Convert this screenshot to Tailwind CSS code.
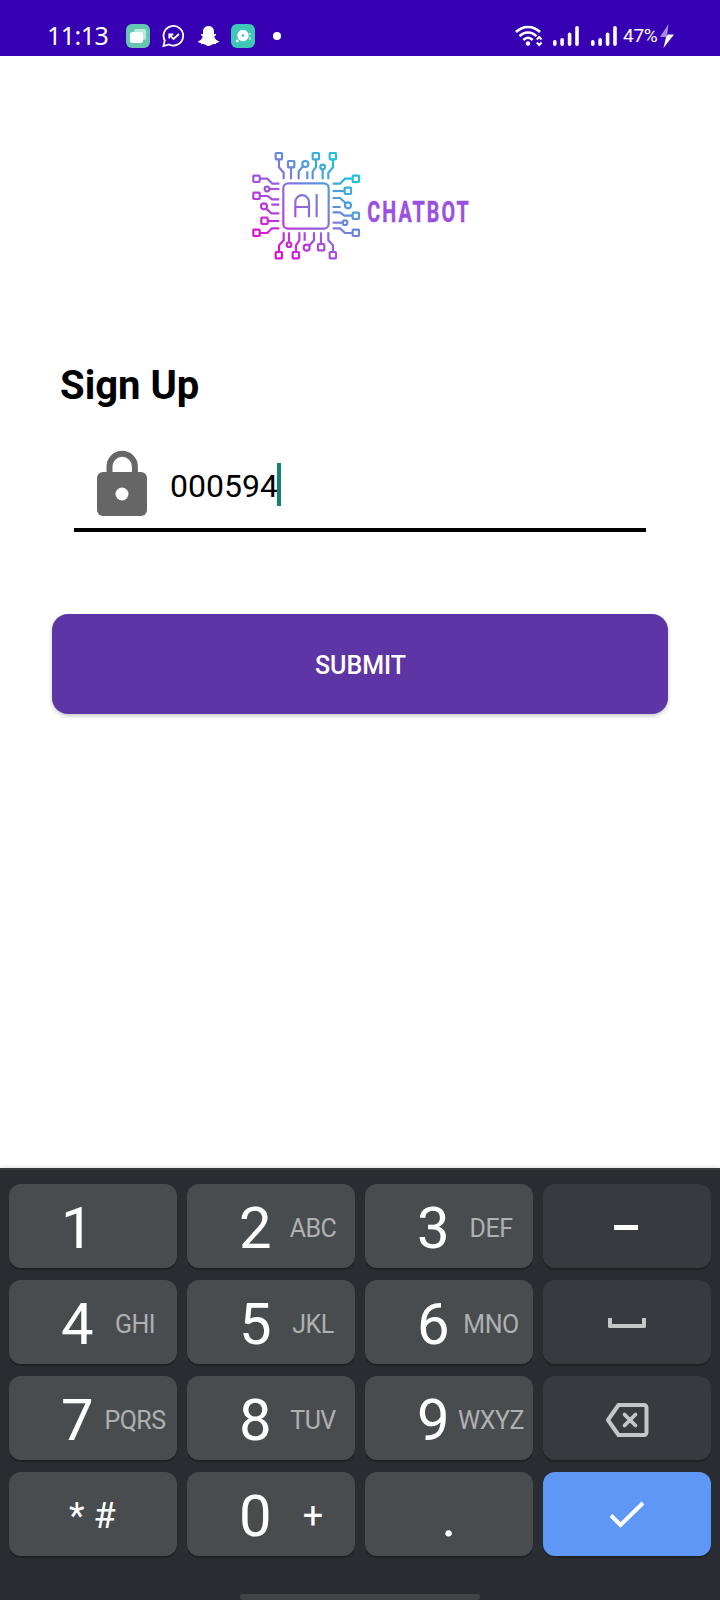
<!DOCTYPE html>
<html lang="en">
<head>
  <meta charset="UTF-8">
  <meta name="viewport" content="width=device-width, initial-scale=1.0">
  <title>Sign Up</title>
  <script src="https://cdn.jsdelivr.net/npm/@tailwindcss/browser@4"></script>
</head>
<body class="bg-white font-['Roboto',sans-serif] w-[720px] h-[1600px] flex flex-col overflow-hidden">

  <!-- Status Bar -->
  <header class="h-14 shrink-0 bg-[#3700b3] text-white flex items-end justify-between pl-[47px] pr-[45px]">
    <div class="flex items-center h-10">
      <span class="w-[79px] text-[25px] leading-[38px] pb-[2px] tracking-[-0.5px] font-['Noto_Sans',sans-serif] whitespace-nowrap">11:13</span>
      <svg class="w-6 h-6" viewBox="0 0 24 24">
        <rect width="24" height="24" rx="6" fill="#66c6b1"/>
        <rect x="8" y="5" width="12" height="11" rx="2" fill="#b9e8df"/>
        <rect x="4" y="8" width="13" height="11" rx="2.5" fill="#fff"/>
      </svg>
      <svg class="w-6 h-6 ml-[11px]" viewBox="0 0 24 24" fill="none" stroke="#fff" stroke-width="1.800">
        <path d="M2.500 22l1.300-5.500a9.800 9.800 0 1 1 4.200 4z"/>
        <path d="M8.300 14.500V10.500h4M8.800 11l3.700 4 5.500-5"/>
      </svg>
      <svg class="w-6 h-6 ml-[11px]" viewBox="0 0 24 24" fill="#fff">
        <path d="M12.500 2c3.600 0 5.500 2.500 5.500 5.700v2.600l1.700-.3c1 .6.3 1.500-1.500 2.400.6 2.300 2.200 4 4.700 4.900.3 1-.9 1.400-2.700 1.700l-.5 1.200c-1.500-.2-3-.2-4.200.6-1.900 1.700-4.100 1.700-6 0-1.200-.8-2.700-.8-4.200-.6L4.800 19c-1.800-.3-3-.7-2.700-1.700 2.500-.9 4.100-2.600 4.700-4.900C5 11.500 4.300 10.600 5.300 10l1.700.3V7.700C7 4.500 8.900 2 12.500 2z"/>
      </svg>
      <svg class="w-6 h-6 ml-[11px]" viewBox="0 0 24 24">
        <rect width="24" height="24" rx="6" fill="#3fc8b6"/>
        <circle cx="12" cy="11.500" r="3.500" fill="none" stroke="#fff" stroke-width="4.400"/>
        <circle cx="12" cy="11.500" r="1" fill="#3fc8b6"/>
        <circle cx="6.300" cy="17" r="1.400" fill="#fff"/>
        <path d="M19 9v2m0 2v3" stroke="#b9ece5" stroke-width="1.500"/>
      </svg>
      <span class="w-2 h-2 ml-[18px] rounded-full bg-white"></span>
    </div>

    <div class="flex items-center h-10">
      <svg class="w-7 h-6" viewBox="0 0 28 24" fill="none" stroke="#fff" stroke-width="2.500">
        <path d="M1 8C8 1.200 18 1.200 25 8M4.500 12.200c5-5 12-5 17 0M8.300 16c3-2.900 6.400-2.900 9.400 0"/>
        <circle cx="13" cy="19.500" r="2.200" fill="#fff" stroke="none"/>
        <path d="M21.800 15.500l2.400-2.500 2.400 2.500M21.800 18.500l2.400 2.500 2.400-2.500" stroke-width="2"/>
      </svg>
      <svg class="w-[27px] h-6 ml-[9px]" viewBox="0 0 27 24" stroke="#fff" stroke-width="3.600" stroke-linecap="round">
        <path d="M2.800 17.800v2.400M10.100 15.800v4.400M17.600 10.300v9.900M25 3.800v16.400"/>
      </svg>
      <svg class="w-[27px] h-6 ml-[11px]" viewBox="0 0 27 24" stroke="#fff" stroke-width="3.600" stroke-linecap="round">
        <path d="M2.800 17.800v2.400M10.100 15.800v4.400M17.600 10.300v9.900M25 3.800v16.400"/>
      </svg>
      <span class="w-[36px] ml-[6px] text-[19px] leading-10 whitespace-nowrap tracking-[-0.3px]">47%</span>
      <svg class="w-4 h-6" viewBox="0 0 16 24">
        <path d="M9.500 0L1 13h14L8 12z" fill="#a58be0"/>
        <path d="M1 13h6L4.500 24 15 10.500H8.700L7.500 13z" fill="#fff"/>
      </svg>
    </div>
  </header>

  <!-- Sign Up Form -->
  <main class="flex-1 flex flex-col">
    <div class="flex mt-[89px] ml-[245px]">
      <svg class="w-[240px] h-[120px]" viewBox="0 0 720 360" fill="none">
        <defs>
          <linearGradient id="chip" x1="70" y1="290" x2="290" y2="70" gradientUnits="userSpaceOnUse">
            <stop offset="0" stop-color="#dc14d2"/>
            <stop offset="0.5" stop-color="#8a6ce0"/>
            <stop offset="1" stop-color="#22bfd8"/>
          </linearGradient>
        </defs>
        <g stroke="url(#chip)" stroke-width="6.500">
          <rect x="115" y="115" width="136" height="136" rx="14"/>
          <path d="M151 217v-46a20 20 0 0 1 41 0v46M151 186h41M215 147v70"/>
          <!-- top pins -->
          <rect x="92" y="24" width="19" height="19" rx="2"/>
          <path d="M102 43v24l14 16v20"/>
          <rect x="129" y="48" width="19" height="19" rx="2"/>
          <path d="M138 67v36"/>
          <circle cx="181" cy="57" r="9"/>
          <path d="M174 64l-13 15v24M187 79v24"/>
          <rect x="203" y="24" width="19" height="19" rx="2"/>
          <path d="M213 43v23l-10 14v23"/>
          <circle cx="233" cy="66" r="7"/>
          <path d="M233 73v30"/>
          <rect x="254" y="24" width="19" height="19" rx="2"/>
          <path d="M264 43v24l-14 16v20"/>
          <!-- bottom pins -->
          <path d="M116 262v24l-14 15v19"/>
          <rect x="92" y="321" width="19" height="19" rx="2"/>
          <path d="M132 262v30"/>
          <circle cx="132" cy="299" r="7"/>
          <path d="M163 262v24l-10 15v19"/>
          <rect x="143" y="321" width="19" height="19" rx="2"/>
          <path d="M179 262v25M207 262v24l-15 16"/>
          <circle cx="185" cy="308" r="9"/>
          <path d="M228 262v34"/>
          <rect x="219" y="297" width="19" height="19" rx="2"/>
          <path d="M250 262v24l14 15v19"/>
          <rect x="254" y="321" width="19" height="19" rx="2"/>
          <!-- left pins -->
          <rect x="25" y="92" width="19" height="19" rx="2"/>
          <path d="M44 101h23l15 15h21"/>
          <circle cx="66" cy="132" r="7"/>
          <path d="M73 132h30"/>
          <rect x="25" y="143" width="19" height="19" rx="2"/>
          <path d="M44 153h24l13 10h22M79 179h24"/>
          <circle cx="57" cy="184" r="9"/>
          <path d="M64 191l15 14h24"/>
          <rect x="49" y="218" width="19" height="19" rx="2"/>
          <path d="M68 228h35"/>
          <rect x="25" y="254" width="19" height="19" rx="2"/>
          <path d="M44 264h23l14-14h22"/>
          <!-- right pins -->
          <path d="M263 116h22l15-15h22"/>
          <rect x="323" y="92" width="19" height="19" rx="2"/>
          <path d="M263 138h35"/>
          <rect x="299" y="128" width="19" height="19" rx="2"/>
          <path d="M263 159h22l17 15M263 186h24"/>
          <circle cx="309" cy="181" r="9"/>
          <path d="M263 202h22l13 10h24"/>
          <rect x="323" y="203" width="19" height="19" rx="2"/>
          <path d="M263 233h30"/>
          <circle cx="300" cy="233" r="7"/>
          <path d="M263 250h22l15 14h22"/>
          <rect x="323" y="254" width="19" height="19" rx="2"/>
        </g>
        <text transform="translate(367 231) scale(0.65 1)" font-family="Roboto, sans-serif" font-weight="700" font-size="91" textLength="468" fill="#9b51e0" stroke="#9b51e0" stroke-width="1.500">CHATBOT</text>
      </svg>
    </div>

    <h1 class="mt-[97px] ml-[60px] text-[40px] leading-[47px] font-bold text-black">Sign Up</h1>

    <div class="mt-[37px] ml-[74px] w-[572px] h-[86px] border-b-4 border-black flex">
      <svg class="w-[52px] h-[68px] ml-[22px] mt-[3px]" viewBox="0 0 52 68">
        <path d="M13.500 24V17.500a12.700 12.700 0 0 1 25.400 0V24" fill="none" stroke="#666" stroke-width="6"/>
        <rect x="1" y="23" width="50" height="44" rx="6" fill="#666"/>
        <circle cx="26" cy="45" r="6.500" fill="#fff"/>
      </svg>
      <div class="flex ml-[22px] mt-[17px] h-[43px]">
        <span class="w-[107px] text-[32px] leading-[46px] text-black whitespace-nowrap">000594</span>
        <span class="w-1 bg-[#15806f]"></span>
      </div>
    </div>

    <button class="mt-[82px] mx-[52px] h-[100px] rounded-[16px] bg-[#5e35a5] text-white text-[25px] font-medium pt-[3px] pl-px shadow-[0_2px_4px_rgba(0,0,0,0.22)]">SUBMIT</button>
  </main>

  <!-- Numeric Keyboard -->
  <section class="h-[432px] shrink-0 bg-[#292d31] border-t-2 border-[#34383a] flex flex-col items-center shadow-[0_-1px_4px_rgba(0,0,0,0.12)]">
    <div class="mt-[14px] grid grid-cols-[repeat(4,168px)] auto-rows-[84px] gap-x-[10px] gap-y-3 text-white text-[58px] leading-none *:rounded-[12px] *:shadow-[0_2px_0_#1e2225]">
      <div class="bg-[#494c4e] grid grid-cols-2 items-center pt-[3px]">
        <span class="pl-[52px]">1</span>
      </div>
      <div class="bg-[#494c4e] grid grid-cols-2 items-center pt-[3px]">
        <span class="pl-[52px]">2</span>
        <span class="text-[25px] text-center tracking-[-0.5px] pt-[2px] text-[#aeb0b1]">ABC</span>
      </div>
      <div class="bg-[#494c4e] grid grid-cols-2 items-center pt-[3px]">
        <span class="pl-[52px]">3</span>
        <span class="text-[25px] text-center tracking-[-0.5px] pt-[2px] text-[#aeb0b1]">DEF</span>
      </div>
      <div class="bg-[#373b3f] flex items-center justify-center">
        <span class="w-6 h-[5px] mt-[3px] mr-[2px] bg-white"></span>
      </div>

      <div class="bg-[#494c4e] grid grid-cols-2 items-center pt-[3px]">
        <span class="pl-[52px]">4</span>
        <span class="text-[25px] text-center tracking-[-0.5px] pt-[2px] text-[#aeb0b1]">GHI</span>
      </div>
      <div class="bg-[#494c4e] grid grid-cols-2 items-center pt-[3px]">
        <span class="pl-[52px]">5</span>
        <span class="text-[25px] text-center tracking-[-0.5px] pt-[2px] text-[#aeb0b1]">JKL</span>
      </div>
      <div class="bg-[#494c4e] grid grid-cols-2 items-center pt-[3px]">
        <span class="pl-[52px]">6</span>
        <span class="text-[25px] text-center tracking-[-0.5px] pt-[2px] text-[#aeb0b1]">MNO</span>
      </div>
      <div class="bg-[#373b3f] flex items-center justify-center">
        <span class="w-[38px] h-[10px] mt-[2px] border-4 border-t-0 rounded-b-[2px] border-[#c5c6c8]"></span>
      </div>

      <div class="bg-[#494c4e] grid grid-cols-2 items-center pt-[3px]">
        <span class="pl-[52px]">7</span>
        <span class="text-[25px] text-center tracking-[-0.5px] pt-[2px] text-[#aeb0b1]">PQRS</span>
      </div>
      <div class="bg-[#494c4e] grid grid-cols-2 items-center pt-[3px]">
        <span class="pl-[52px]">8</span>
        <span class="text-[25px] text-center tracking-[-0.5px] pt-[2px] text-[#aeb0b1]">TUV</span>
      </div>
      <div class="bg-[#494c4e] grid grid-cols-2 items-center pt-[3px]">
        <span class="pl-[52px]">9</span>
        <span class="text-[25px] text-center tracking-[-0.5px] pt-[2px] text-[#aeb0b1]">WXYZ</span>
      </div>
      <div class="bg-[#373b3f] flex items-center justify-center">
        <svg class="w-11 h-9 mt-[4px] mr-px" viewBox="0 0 44 36" fill="none" stroke="#c5c6c8" stroke-width="4" stroke-linejoin="round" stroke-linecap="round">
          <path d="M13.500 3H39a2.500 2.500 0 0 1 2.500 2.500v25A2.500 2.500 0 0 1 39 33H13.500L3 18z"/>
          <path d="M19.500 12.500l11 11M30.500 12.500l-11 11" stroke-width="3.800"/>
        </svg>
      </div>

      <div class="bg-[#494c4e] grid grid-cols-2 items-center pt-1 text-[36px]">
        <span class="pl-[60px] whitespace-pre">* #</span>
      </div>
      <div class="bg-[#494c4e] grid grid-cols-2 items-center pt-[3px]">
        <span class="pl-[52px]">0</span>
        <span class="text-[36px] text-center">+</span>
      </div>
      <div class="bg-[#494c4e] flex items-center justify-center pt-[3px]">.</div>
      <div class="bg-[#5f97f6] flex items-center justify-center">
        <svg class="w-9 h-7 mt-[2px]" viewBox="0 0 36 28" fill="none" stroke="#fff" stroke-width="4">
          <path d="M2 14.500l9.500 9.500L34 2"/>
        </svg>
      </div>
    </div>
    <div class="w-60 h-[6px] mt-auto rounded-full bg-[#414347]"></div>
  </section>

</body>
</html>
